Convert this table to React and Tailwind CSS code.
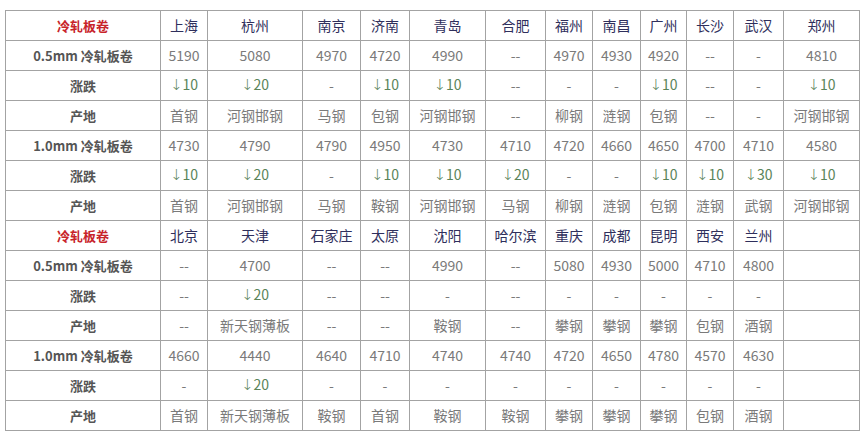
const WIDTHS = [155, 47, 95, 58, 49, 76, 60, 47, 48, 46, 47, 50, 76];

const BLOCKS = [
  {
    cities: ['上海', '杭州', '南京', '济南', '青岛', '合肥', '福州', '南昌', '广州', '长沙', '武汉', '郑州'],
    rows: [
      ['0.5mm 冷轧板卷', ['5190', '5080', '4970', '4720', '4990', '--', '4970', '4930', '4920', '--', '-', '4810']],
      ['涨跌', ['↓10', '↓20', '-', '↓10', '↓10', '--', '-', '-', '↓10', '--', '-', '↓10']],
      ['产地', ['首钢', '河钢邯钢', '马钢', '包钢', '河钢邯钢', '--', '柳钢', '涟钢', '包钢', '--', '-', '河钢邯钢']],
      ['1.0mm 冷轧板卷', ['4730', '4790', '4790', '4950', '4730', '4710', '4720', '4660', '4650', '4700', '4710', '4580']],
      ['涨跌', ['↓10', '↓20', '-', '↓10', '↓10', '↓20', '-', '-', '↓10', '↓10', '↓30', '↓10']],
      ['产地', ['首钢', '河钢邯钢', '马钢', '鞍钢', '河钢邯钢', '马钢', '柳钢', '涟钢', '包钢', '涟钢', '武钢', '河钢邯钢']],
    ],
  },
  {
    cities: ['北京', '天津', '石家庄', '太原', '沈阳', '哈尔滨', '重庆', '成都', '昆明', '西安', '兰州', ''],
    rows: [
      ['0.5mm 冷轧板卷', ['--', '4700', '--', '--', '4990', '--', '5080', '4930', '5000', '4710', '4800', '']],
      ['涨跌', ['--', '↓20', '--', '--', '-', '--', '-', '-', '-', '-', '-', '']],
      ['产地', ['--', '新天钢薄板', '--', '--', '鞍钢', '--', '攀钢', '攀钢', '攀钢', '包钢', '酒钢', '']],
      ['1.0mm 冷轧板卷', ['4660', '4440', '4640', '4710', '4740', '4740', '4720', '4650', '4780', '4570', '4630', '']],
      ['涨跌', ['-', '↓20', '-', '-', '-', '-', '-', '-', '-', '-', '-', '']],
      ['产地', ['首钢', '新天钢薄板', '鞍钢', '首钢', '鞍钢', '鞍钢', '攀钢', '攀钢', '攀钢', '包钢', '酒钢', '']],
    ],
  },
];

const cell = 'border border-[#a3a3a3] h-[30px] p-0 text-center align-middle whitespace-nowrap';

function Value({ v }) {
  if (v.startsWith('↓')) {
    return (
      <>
        <span className="font-['DejaVu_Sans',sans-serif] text-[15px] font-light">↓</span>
        {v.slice(1)}
      </>
    );
  }
  return v;
}

export default function App() {
  return (
    <div
      className="bg-white w-[867px] h-[440px] pt-[10px] pl-[5px]"
      style={{ fontFamily: '"Noto Sans CJK SC", "Liberation Sans", sans-serif' }}
    >
      <table className="border-collapse table-fixed w-[854px]">
        <colgroup>
          {WIDTHS.map((w, i) => (
            <col key={i} style={{ width: w }} />
          ))}
        </colgroup>
        <tbody>
          {BLOCKS.map((b, bi) => (
            <>
              <tr key={'h' + bi}>
                <td className={cell + ' text-[13px] font-bold text-[#c8242b]'}>冷轧板卷</td>
                {b.cities.map((c, i) => (
                  <td key={i} className={cell + ' text-[14px] text-[#2f2f5c]'}>{c}</td>
                ))}
              </tr>
              {b.rows.map(([label, vals], ri) => (
                <tr key={bi + '-' + ri}>
                  <td className={cell + ' text-[13px] font-bold text-[#555]'}>{label}</td>
                  {vals.map((v, i) => (
                    <td
                      key={i}
                      className={cell + ' text-[14px] ' + (v.startsWith('↓') ? 'text-[#5a845a]' : 'text-[#7a7a7a]')}
                    >
                      <Value v={v} />
                    </td>
                  ))}
                </tr>
              ))}
            </>
          ))}
        </tbody>
      </table>
    </div>
  );
}
